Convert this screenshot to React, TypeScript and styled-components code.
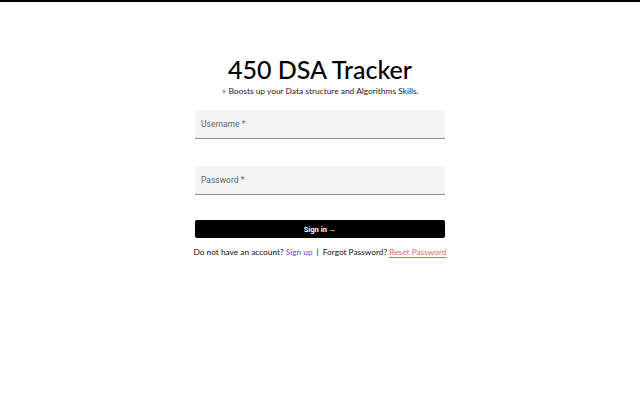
import React from 'react';
import styled, { createGlobalStyle } from 'styled-components';

const Global = createGlobalStyle`
  html, body {
    margin: 0;
    padding: 0;
    background: #fff;
  }
  body {
    font-family: 'Lato', 'Noto Sans', sans-serif;
  }
`;

const Page = styled.div`
  border-top: 2px solid #000;
  width: 640px;
  height: 398px;
  display: flex;
  flex-direction: column;
  align-items: center;
`;

const Title = styled.h1`
  margin: 51px 0 0 0;
  font-size: 25px;
  font-weight: 500;
  color: #000;
  line-height: 32px;
`;

const Subtitle = styled.p`
  margin: 0;
  font-size: 8.4px;
  color: #222;
  line-height: 12px;
`;

const Bolt = styled.span`
  font-family: 'DejaVu Sans', sans-serif;
  font-size: 7px;
  color: #333;
  margin-right: 2px;
`;

const Form = styled.form`
  width: 250px;
  display: flex;
  flex-direction: column;
  margin-top: 12px;
`;

const Field = styled.div<{ gap: number }>`
  height: 28px;
  background: #f4f4f4;
  border-bottom: 1px solid #8a8a8a;
  border-radius: 3px 3px 0 0;
  display: flex;
  align-items: center;
  padding-left: 6px;
  margin-bottom: ${p => p.gap}px;
`;

const Label = styled.span`
  font-family: 'Roboto', 'Liberation Sans', sans-serif;
  font-size: 8.5px;
  color: #666;
`;

const Button = styled.button`
  height: 18px;
  border: none;
  border-radius: 2px;
  background: #000;
  color: #fff;
  font-family: 'Roboto', 'Liberation Sans', sans-serif;
  font-weight: 700;
  font-size: 7.5px;
  cursor: pointer;
`;

const Footer = styled.p`
  margin: 9px 0 0 0;
  font-size: 8.3px;
  color: #111;
  white-space: nowrap;
`;

const Link = styled.a<{ tone: 'blue' | 'red' }>`
  color: ${p => (p.tone === 'blue' ? '#3d5fc4' : '#e46a6a')};
  text-decoration: ${p => (p.tone === 'red' ? 'underline' : 'none')};
  text-underline-offset: 2px;
`;

const Sep = styled.span`
  margin: 0 4px;
`;

export default function App() {
  return (
    <>
      <Global />
      <Page>
        <Title>450 DSA Tracker</Title>
        <Subtitle>
          <Bolt>⚡&#xFE0E;</Bolt>Boosts up your Data structure and Algorithms Skills.
        </Subtitle>
        <Form onSubmit={e => e.preventDefault()}>
          <Field gap={27}>
            <Label>Username *</Label>
          </Field>
          <Field gap={25}>
            <Label>Password *</Label>
          </Field>
          <Button type="submit">Sign in →</Button>
        </Form>
        <Footer>
          Do not have an account? <Link tone="blue">Sign up</Link>
          <Sep>|</Sep>
          Forgot Password? <Link tone="red">Reset Password</Link>
        </Footer>
      </Page>
    </>
  );
}
